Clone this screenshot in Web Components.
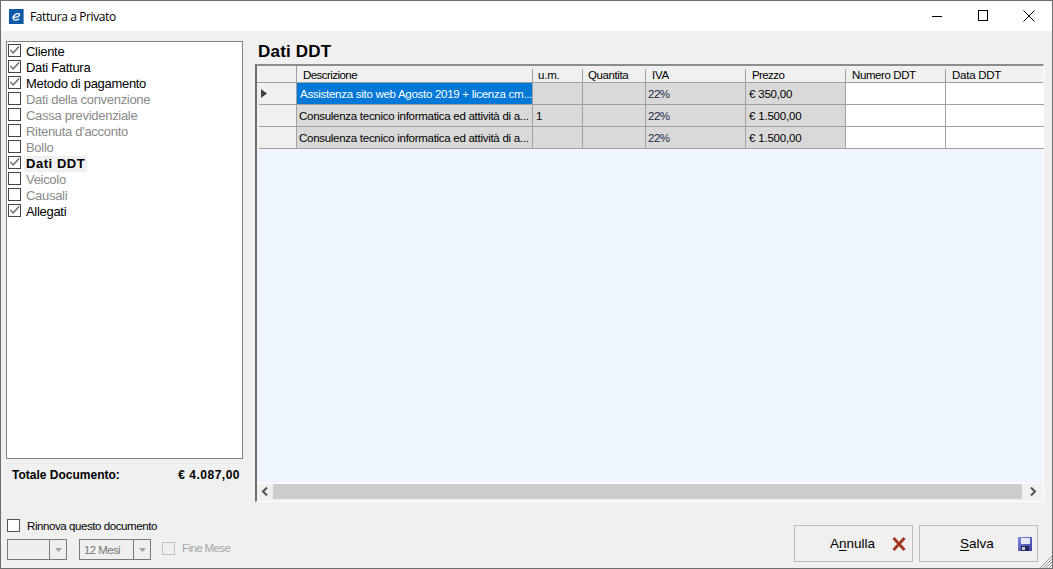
<!DOCTYPE html>
<html>
<head>
<meta charset="utf-8">
<title>Fattura a Privato</title>
<style>
    html, body { margin: 0; padding: 0; background: #f0f0f0; overflow: hidden; }
    body { font-family: "Liberation Sans", Arial, sans-serif; font-size: 13px; color: #000; }
</style>
</head>
<body>
<app-window>
    <title-bar slot="title" caption="Fattura a Privato"></title-bar>
    <check-list slot="list">
        <check-item checked>Cliente</check-item>
        <check-item checked>Dati Fattura</check-item>
        <check-item checked>Metodo di pagamento</check-item>
        <check-item off>Dati della convenzione</check-item>
        <check-item off>Cassa previdenziale</check-item>
        <check-item off>Ritenuta d'acconto</check-item>
        <check-item off>Bollo</check-item>
        <check-item checked active>Dati DDT</check-item>
        <check-item off>Veicolo</check-item>
        <check-item off>Causali</check-item>
        <check-item checked>Allegati</check-item>
    </check-list>
    <total-row slot="total" label="Totale Documento:" value="€ 4.087,00"></total-row>
    <ddt-grid slot="grid" heading="Dati DDT">
        <ddt-row current selected desc="Assistenza sito web Agosto 2019 + licenza cm..." um="" iva="22%" price="€ 350,00"></ddt-row>
        <ddt-row desc="Consulenza tecnico informatica ed attività di a..." um="1" iva="22%" price="€ 1.500,00"></ddt-row>
        <ddt-row desc="Consulenza tecnico informatica ed attività di a..." um="" iva="22%" price="€ 1.500,00"></ddt-row>
    </ddt-grid>
    <renew-options slot="options"></renew-options>
    <action-button slot="actions" key="n" before="A" after="nulla" icon="cancel"></action-button>
    <action-button slot="actions" key="S" before="" after="alva" icon="save"></action-button>
</app-window>

<script>
class AppWindow extends HTMLElement {
    constructor() {
        super();
        this.attachShadow({mode: "open"}).innerHTML = `
            <style>
                :host { display: flex; flex-direction: column; position: relative; box-sizing: border-box; width: 1053px; height: 569px; border: 1px solid #6e6e6e; background: #f0f0f0; }
                .main { display: flex; gap: 12px; height: 471px; padding: 10px 8px 0 5px; box-sizing: border-box; flex: none; }
                .left { display: flex; flex-direction: column; width: 237px; flex: none; }
                .right { flex: 1; min-width: 0; display: flex; }
                .foot { display: flex; flex: 1; box-sizing: border-box; padding: 0 14px 6px 6px; justify-content: space-between; align-items: flex-end; }
                .actions { display: flex; gap: 6px; }
                .grip { position: absolute; right: 0; bottom: 0; width: 13px; height: 13px; }
            </style>
            <slot name="title"></slot>
            <div class="main">
                <div class="left">
                    <slot name="list"></slot>
                    <slot name="total"></slot>
                </div>
                <div class="right"><slot name="grid"></slot></div>
            </div>
            <div class="foot">
                <slot name="options"></slot>
                <div class="actions"><slot name="actions"></slot></div>
            </div>
            <svg class="grip" viewBox="0 0 13 13">
                <path d="M13 1 1 13M13 4 4 13M13 7 7 13M13 10 10 13" stroke="#9a9a9a" stroke-width="1" fill="none"/>
            </svg>`;
    }
}

class TitleBar extends HTMLElement {
    constructor() {
        super();
        this.attachShadow({mode: "open"}).innerHTML = `
            <style>
                :host { display: flex; align-items: center; height: 30px; background: #fff; flex: none; }
                .logo { width: 15px; height: 15px; margin-left: 8px; }
                .cap { margin-left: 6px; font: 12px "Open Sans", "Liberation Sans", sans-serif; letter-spacing: -.4px; color: #000; flex: 1; }
                .btn { width: 46px; height: 30px; display: flex; align-items: center; justify-content: center; }
                svg.b { width: 12px; height: 12px; }
            </style>
            <svg class="logo" viewBox="0 0 15 15">
                <rect width="15" height="15" fill="#0d5aa7"/>
                <rect x="14" width="1" height="15" fill="#6d97c2"/>
                <path d="M3.800 8.200c2.400.3 5.700-.3 6.600-1.800.7-1.300-.8-2.200-2.500-1.700C5.600 5.400 3.700 7.800 4.200 9.800c.5 1.700 3.300 1.700 5.600.3" fill="none" stroke="#fff" stroke-width="1.300" stroke-linecap="round"/>
            </svg>
            <span class="cap">${this.getAttribute("caption")}</span>
            <div class="btn"><svg class="b" viewBox="0 0 12 12"><path d="M1 6.500h10" stroke="#000" fill="none"/></svg></div>
            <div class="btn"><svg class="b" viewBox="0 0 12 12"><rect x="1.500" y=".5" width="9" height="10" stroke="#000" fill="none"/></svg></div>
            <div class="btn"><svg class="b" viewBox="0 0 12 12"><path d="M.5.5l11 11M11.500.5l-11 11" stroke="#000" fill="none"/></svg></div>`;
    }
}

class CheckList extends HTMLElement {
    constructor() {
        super();
        this.attachShadow({mode: "open"}).innerHTML = `
            <style>
                :host { display: flex; flex-direction: column; box-sizing: border-box; height: 418px; padding: 2px 1px; background: #fff; border: 1px solid #828282; flex: none; }
            </style>
            <slot></slot>`;
    }
}

class CheckItem extends HTMLElement {
    constructor() {
        super();
        const active = this.hasAttribute("active");
        const off = this.hasAttribute("off");
        this.attachShadow({mode: "open"}).innerHTML = `
            <style>
                :host { display: flex; align-items: center; height: 16px; font-size: 13px; letter-spacing: ${active ? ".55px" : "-.3px"}; color: ${off ? "#8a8a8a" : "#000"}; font-weight: ${active ? "bold" : "normal"}; }
                svg { width: 13px; height: 13px; margin: -4px 3px 0 0; flex: none; }
                span { padding: 1px 2px; background: ${active ? "#f0f0f0" : "transparent"}; line-height: 14px; }
            </style>
            <svg viewBox="0 0 13 13">
                <rect x=".5" y=".5" width="12" height="12" fill="#fff" stroke="#444"/>
                ${this.hasAttribute("checked") ? '<path d="M2.500 6 5.200 9 11 2.500" fill="none" stroke="#6a6a6a" stroke-width="1.500"/>' : ""}
            </svg>
            <span><slot></slot></span>`;
    }
}

class TotalRow extends HTMLElement {
    constructor() {
        super();
        this.attachShadow({mode: "open"}).innerHTML = `
            <style>
                :host { display: flex; justify-content: space-between; padding: 9px 3px 0 6px; font-size: 12px; font-weight: bold; color: #000; }
                .v { letter-spacing: .5px; }
            </style>
            <span>${this.getAttribute("label")}</span>
            <span class="v">${this.getAttribute("value")}</span>`;
    }
}

class DdtGrid extends HTMLElement {
    constructor() {
        super();
        const cols = [["Descrizione", 236, 6, -.55], ["u.m.", 50, 5, -.2], ["Quantita", 63, 5, -.4], ["IVA", 100, 6, -.3], ["Prezzo", 100, 6, -.6], ["Numero DDT", 100, 6, -.4], ["Data DDT", 98, 6, -.25]];
        const heads = cols.map(c => `<div class="h" style="width:${c[1]}px;padding-left:${c[2]}px;letter-spacing:${c[3]}px">${c[0]}</div>`).join("");
        this.attachShadow({mode: "open"}).innerHTML = `
            <style>
                :host { display: flex; flex-direction: column; flex: 1; min-width: 0; }
                h2 { margin: 0; height: 23px; line-height: 21px; font-size: 17px; font-weight: bold; letter-spacing: .2px; padding-left: 3px; color: #000; }
                .box { flex: 1; display: flex; flex-direction: column; box-sizing: border-box; background: #eff6fd; border-top: 2px solid #8c8c8c; border-left: 2px solid #6e6e6e; border-right: 1px solid #fff; border-bottom: 1px solid #fff; min-height: 0; }
                .head { display: flex; box-sizing: border-box; height: 17px; background: #f0f0f0; border-bottom: 1px solid #a0a0a0; flex: none; font-size: 11.500px; color: #000; }
                .corner { width: 39px; border-right: 1px solid #a0a0a0; flex: none; }
                .h { box-sizing: border-box; border-right: 1px solid #a0a0a0; flex: none; height: 13px; margin-top: 3px; line-height: 13px; }
                .h:last-child { border-right: 0; }
                .rows { flex: 1; min-height: 0; }
                .bar { display: flex; align-items: stretch; box-sizing: border-box; height: 18px; border-top: 1px solid #fff; padding-bottom: 2px; background: #f0f0f0; flex: none; }
                .arrow { width: 16px; display: flex; align-items: center; justify-content: center; flex: none; }
                .arrow.r { width: 21px; }
                .arrow svg { width: 8px; height: 9px; }
                .thumb { flex: 1; background: #cdcdcd; }
            </style>
            <h2>${this.getAttribute("heading")}</h2>
            <div class="box">
                <div class="head"><div class="corner"></div>${heads}</div>
                <div class="rows"><slot></slot></div>
                <div class="bar">
                    <div class="arrow"><svg viewBox="0 0 8 9"><path d="M6 .5 2 4.500l4 4" fill="none" stroke="#505050" stroke-width="2"/></svg></div>
                    <div class="thumb"></div>
                    <div class="arrow r"><svg viewBox="0 0 8 9"><path d="M2 .5l4 4-4 4" fill="none" stroke="#505050" stroke-width="2"/></svg></div>
                </div>
            </div>`;
    }
}

class DdtRow extends HTMLElement {
    constructor() {
        super();
        const current = this.hasAttribute("current");
        const sel = this.hasAttribute("selected");
        this.attachShadow({mode: "open"}).innerHTML = `
            <style>
                :host { display: flex; height: 22px; font-size: 11.500px; line-height: 22px; color: #000; }
                .rh { box-sizing: border-box; width: 40px; height: 22px; flex: none; background: linear-gradient(#a0a0a0, #a0a0a0) no-repeat 2px 100% / 100% 1px #f0f0f0; border-right: 1px solid #a0a0a0; display: flex; align-items: center; padding-left: 4px; }
                .rh svg { width: 6px; height: 9px; margin-top: -1px; }
                .c { box-sizing: border-box; flex: none; height: 22px; border-right: 1px solid #a0a0a0; border-bottom: 1px solid #a0a0a0; background: #d9d9d9; padding-left: 3px; white-space: nowrap; overflow: hidden; }
                .d { letter-spacing: -.28px; padding-left: 2px; }
                .sel { background: #0078d7; color: #fff; padding-left: 3px; }
                .w { background: #fff; }
                .iva { color: #1a2a4a; letter-spacing: -.5px; padding-left: 2px; }
                .p { letter-spacing: -.2px; }
            </style>
            <div class="rh">${current ? '<svg viewBox="0 0 6 9"><path d="M0 0l6 4.500L0 9z" fill="#404040"/></svg>' : ""}</div>
            <div class="c d ${sel ? "sel" : ""}" style="width:236px">${this.getAttribute("desc")}</div>
            <div class="c" style="width:50px">${this.getAttribute("um")}</div>
            <div class="c" style="width:63px"></div>
            <div class="c iva" style="width:100px">${this.getAttribute("iva")}</div>
            <div class="c p" style="width:100px">${this.getAttribute("price")}</div>
            <div class="c w" style="width:100px"></div>
            <div class="c w" style="width:98px;border-right:0"></div>`;
    }
}

class ComboBox extends HTMLElement {
    constructor() {
        super();
        this.attachShadow({mode: "open"}).innerHTML = `
            <style>
                :host { display: flex; box-sizing: border-box; height: 21px; border: 1px solid #7a7a7a; background: #efefef; font-size: 11.500px; letter-spacing: -.6px; line-height: 20px; color: #777; flex: none; }
                .v { flex: 1; padding-left: 4px; }
                .b { width: 16px; border-left: 1px solid #7a7a7a; display: flex; align-items: center; justify-content: center; }
                .b svg { width: 7px; height: 4px; }
            </style>
            <div class="v"><slot></slot></div>
            <div class="b"><svg viewBox="0 0 7 4"><path d="M0 0h7L3.500 4z" fill="#a0a0a0"/></svg></div>`;
    }
}

class RenewOptions extends HTMLElement {
    constructor() {
        super();
        this.attachShadow({mode: "open"}).innerHTML = `
            <style>
                :host { display: flex; flex-direction: column; gap: 7px; font-size: 11.500px; margin-bottom: 2px; }
                .r { display: flex; align-items: center; }
                .top { height: 13px; letter-spacing: -.42px; color: #000; }
                .box { width: 13px; height: 13px; box-sizing: border-box; border: 1px solid #555; background: #fff; margin-right: 7px; flex: none; }
                .dis { border-color: #c0c0c0; background: #f0f0f0; margin: -2px 7px 0 11px; }
                .lab { color: #a6a6a6; margin-top: -3px; letter-spacing: -.6px; }
                .c1 { width: 60px; margin-right: 12px; }
                .c2 { width: 72px; }
            </style>
            <div class="r top"><div class="box"></div><span>Rinnova questo documento</span></div>
            <div class="r">
                <combo-box class="c1"></combo-box>
                <combo-box class="c2">12 Mesi</combo-box>
                <div class="box dis"></div><span class="lab">Fine Mese</span>
            </div>`;
    }
}

class ActionButton extends HTMLElement {
    constructor() {
        super();
        const save = this.getAttribute("icon") == "save";
        const icon = save ? `
            <svg viewBox="0 0 14 14">
                <defs><linearGradient id="fl" x1="0" y1="0" x2="1" y2="1"><stop offset="0" stop-color="#8088dc"/><stop offset="1" stop-color="#3a40a0"/></linearGradient></defs>
                <rect width="14" height="14" fill="url(#fl)"/>
                <rect x="3" y="1" width="9" height="6" fill="#e4e6f6"/>
                <rect x="3" y="9" width="8" height="5" fill="#23275c"/>
                <rect x="4" y="10" width="3" height="3" fill="#c8c8d8"/>
            </svg>` : `
            <svg viewBox="0 0 14 14">
                <path d="M1.500 1 12.500 13M12.500 1 1.500 13" stroke="#a5321f" stroke-width="2.800" fill="none"/>
            </svg>`;
        const before = this.getAttribute("before");
        const key = this.getAttribute("key");
        this.attachShadow({mode: "open"}).innerHTML = `
            <style>
                :host { display: flex; align-items: center; box-sizing: border-box; width: 119px; height: 37px; border: 1px solid #bdbdbd; background: #f0f0f0; font-size: 13.500px; color: #000; padding-left: ${save ? 40 : 35}px; }
                u { text-underline-offset: 2px; }
                span { flex: 1; }
                svg { width: 14px; height: 14px; margin-right: ${save ? 5 : 6}px; flex: none; }
            </style>
            <span>${before}<u>${key}</u>${this.getAttribute("after")}</span>${icon}`;
    }
}

window.customElements.define("app-window", AppWindow);
window.customElements.define("title-bar", TitleBar);
window.customElements.define("check-list", CheckList);
window.customElements.define("check-item", CheckItem);
window.customElements.define("total-row", TotalRow);
window.customElements.define("ddt-grid", DdtGrid);
window.customElements.define("ddt-row", DdtRow);
window.customElements.define("combo-box", ComboBox);
window.customElements.define("renew-options", RenewOptions);
window.customElements.define("action-button", ActionButton);
</script>
</body>
</html>
